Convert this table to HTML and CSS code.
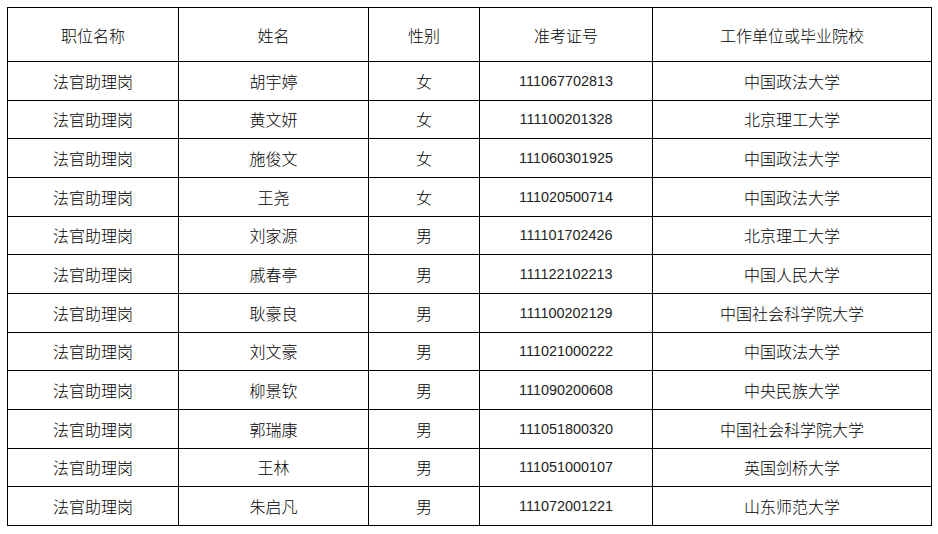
FILE: index.html
```html
<!DOCTYPE html>
<html lang="zh">
<head>
<meta charset="utf-8">
<link rel="stylesheet" href="styles.css">
</head>
<body>
<div class="wrap">
<table class="list">
<colgroup>
<col class="c1"><col class="c2"><col class="c3"><col class="c4"><col class="c5">
</colgroup>
<thead>
<tr><th>职位名称</th><th>姓名</th><th>性别</th><th>准考证号</th><th>工作单位或毕业院校</th></tr>
</thead>
<tbody>
<tr><td>法官助理岗</td><td>胡宇婷</td><td>女</td><td class="num">111067702813</td><td>中国政法大学</td></tr>
<tr><td>法官助理岗</td><td>黄文妍</td><td>女</td><td class="num">111100201328</td><td>北京理工大学</td></tr>
<tr><td>法官助理岗</td><td>施俊文</td><td>女</td><td class="num">111060301925</td><td>中国政法大学</td></tr>
<tr><td>法官助理岗</td><td>王尧</td><td>女</td><td class="num">111020500714</td><td>中国政法大学</td></tr>
<tr><td>法官助理岗</td><td>刘家源</td><td>男</td><td class="num">111101702426</td><td>北京理工大学</td></tr>
<tr><td>法官助理岗</td><td>戚春亭</td><td>男</td><td class="num">111122102213</td><td>中国人民大学</td></tr>
<tr><td>法官助理岗</td><td>耿豪良</td><td>男</td><td class="num">111100202129</td><td>中国社会科学院大学</td></tr>
<tr><td>法官助理岗</td><td>刘文豪</td><td>男</td><td class="num">111021000222</td><td>中国政法大学</td></tr>
<tr><td>法官助理岗</td><td>柳景钦</td><td>男</td><td class="num">111090200608</td><td>中央民族大学</td></tr>
<tr><td>法官助理岗</td><td>郭瑞康</td><td>男</td><td class="num">111051800320</td><td>中国社会科学院大学</td></tr>
<tr><td>法官助理岗</td><td>王林</td><td>男</td><td class="num">111051000107</td><td>英国剑桥大学</td></tr>
<tr><td>法官助理岗</td><td>朱启凡</td><td>男</td><td class="num">111072001221</td><td>山东师范大学</td></tr>
</tbody>
</table>
</div>
</body>
</html>
```
FILE: styles.css
```css
html, body {
  margin: 0;
  padding: 0;
  background: #ffffff;
}
.wrap {
  padding: 7px 0 0 7px;
}
.list {
  border-collapse: collapse;
  table-layout: fixed;
  width: 924px;
  font-family: "Noto Sans CJK SC", "Liberation Sans", sans-serif;
  font-size: 16px;
  font-weight: 300;
  color: #000;
}
.c1 { width: 171px; }
.c2 { width: 190px; }
.c3 { width: 111px; }
.c4 { width: 173px; }
.c5 { width: 279px; }
.list th, .list td {
  border: 1px solid #000;
  text-align: center;
  vertical-align: middle;
  padding: 0;
  font-weight: 300;
  line-height: 1;
}
.list thead tr { height: 54px; }
.list tbody tr { height: 38.67px; }
.list td.num {
  font-family: "Liberation Sans", sans-serif;
  font-size: 14.4px;
  font-weight: 400;
  color: #222;
}
```
